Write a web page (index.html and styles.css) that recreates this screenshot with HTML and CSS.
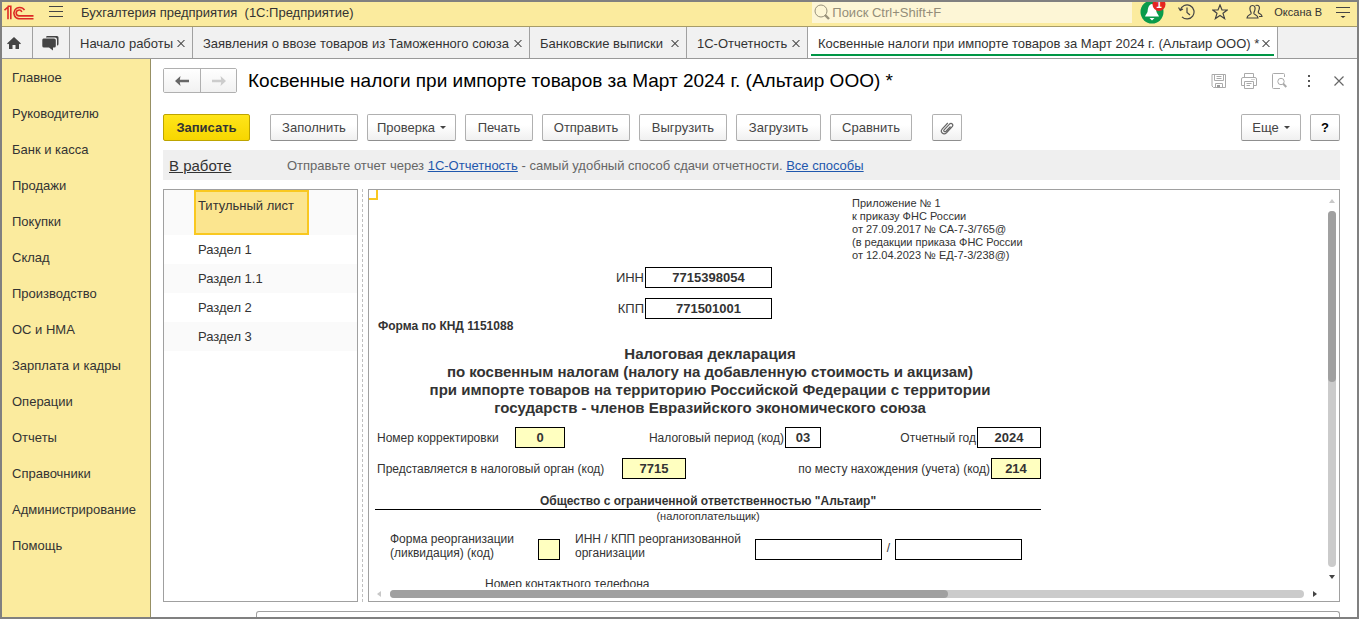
FILE: index.html
```
<!DOCTYPE html>
<html lang="ru">
<head>
<meta charset="utf-8">
<title>Бухгалтерия предприятия</title>
<link rel="stylesheet" href="styles.css">
</head>
<body>
<div class="app">
  <header class="topbar">
    <svg class="logo" width="30" height="15" viewBox="0 0 30 15" fill="none" stroke="#dd2a25" stroke-width="1.6" aria-label="1С">
      <path d="M0.5 5.2 4 2V14.2M3.6 1.3H6.8V14.2"/>
      <path d="M20.5 5.2A5.7 5.7 0 1 0 15 13.8H29.500"/>
      <path d="M17.800 7A2.900 2.900 0 1 0 15.200 10.900H29.500"/>
    </svg>
    <button class="plain menu" aria-label="Меню"><svg width="14" height="14" viewBox="0 0 14 14" stroke="#444" stroke-width="1"><path d="M0 1.500H14M0 6.500H14M0 11.500H14"/></svg></button>
    <div class="app-name">Бухгалтерия предприятия &nbsp;(1С:Предприятие)</div>
    <label class="search">
      <svg width="16" height="16" viewBox="0 0 16 16" fill="none" stroke="#98917a"><circle cx="7" cy="7" r="6"/><path d="M11 11 15 15" stroke-width="2.400"/></svg>
      <input type="search" placeholder="Поиск Ctrl+Shift+F" aria-label="Поиск">
    </label>
    <button class="plain bell" aria-label="Уведомления">
      <svg width="26" height="24" viewBox="0 0 26 24"><circle cx="12" cy="10" r="11.500" fill="#0a9b4b"/><path d="M12 2C8.500 2.500 8 6 7.600 9.500 7.300 11.500 5.500 12.500 5 14.500H19C18.500 12.500 16.700 11.500 16.400 9.500 16 6 15.500 2.500 12 2ZM9.500 16H14.500L12 18.500Z" fill="#fff"/><circle cx="19" cy="2.500" r="6.500" fill="#e52620"/></svg>
      <span class="badge">1</span>
    </button>
    <button class="plain history" aria-label="История"><svg width="17" height="16" viewBox="0 0 17 16" fill="none" stroke="#444" stroke-width="1.200"><path d="M2.300 6A7 7 0 1 1 4 12.800M0.500 3.500 2.300 6.500 5 5M9 3.500V8.500L12 11"/></svg></button>
    <button class="plain star" aria-label="Избранное"><svg width="16" height="16" viewBox="0 0 16 16" fill="none" stroke="#444" stroke-width="1.200"><path d="M8 1 10 6H15.200L11 9.300 12.600 14.600 8 11.400 3.400 14.600 5 9.300 0.800 6H6Z"/></svg></button>
    <button class="plain user" aria-label="Пользователь"><svg width="17" height="16" viewBox="0 0 17 16" fill="none" stroke="#444" stroke-width="1.200"><path d="M6.500 1.500C4 1.500 3.500 4 4.200 6.300 4.800 8.300 5.500 8.500 5 9.800 4.300 11 1 11 1 14H12C12 11 8.700 11 8 9.800 7.500 8.500 8.200 8.300 8.800 6.300 9.500 4 9 1.500 6.500 1.500ZM9.500 1.500C13 .5 14.200 3 13 5.800 12.300 7.300 12 8 12.500 8.800 13.500 10 16 10 16 12.500H13"/></svg></button>
    <span class="user-name">Оксана В</span>
    <button class="plain settings" aria-label="Настройки"><svg width="16" height="14" viewBox="0 0 16 14" stroke="#444" stroke-width="1.200"><path d="M1 2.500H15M1 7.500H15"/><path d="M5.500 11H10.500L8 13Z" fill="#333" stroke="none"/></svg></button>
  </header>

  <nav class="tabs" aria-label="Открытые окна">
    <button class="tab tab-home" aria-label="Начальная страница"><svg width="14" height="12" viewBox="0 0 14 12" fill="#444"><path d="M7 0 14 6.500 13 7.200 12 6.700V12H8.500V8H5.500V12H2V6.700L1 7.200 0 6.500Z"/></svg></button>
    <button class="tab tab-chat" aria-label="Обсуждения"><svg width="17" height="15" viewBox="0 0 17 15" fill="#444"><path d="M5 0H15Q16.500 0 16.500 1.500V8Q16.500 9.500 15 9.500V3.500Q15 1.500 13 1.500H4Q4 0 5 0Z"/><path d="M1.500 2.500H12Q13.800 2.500 13.800 4V10Q13.800 11.500 12.300 11.500H11V14.500L7 11.500H2Q0.300 11.500 0.300 10V4Q0.300 2.500 1.500 2.500Z"/></svg></button>
    <button class="tab tab-start"><span>Начало работы</span><i class="close"></i></button>
    <button class="tab tab-import"><span>Заявления о ввозе товаров из Таможенного союза</span><i class="close"></i></button>
    <button class="tab tab-bank"><span>Банковские выписки</span><i class="close"></i></button>
    <button class="tab tab-report"><span>1С-Отчетность</span><i class="close"></i></button>
    <button class="tab tab-active"><span>Косвенные налоги при импорте товаров за Март 2024 г. (Альтаир ООО) *</span><i class="close"></i></button>
  </nav>

  <div class="body">
    <nav class="sidebar" aria-label="Разделы">
      <a href="#">Главное</a>
      <a href="#">Руководителю</a>
      <a href="#">Банк и касса</a>
      <a href="#">Продажи</a>
      <a href="#">Покупки</a>
      <a href="#">Склад</a>
      <a href="#">Производство</a>
      <a href="#">ОС и НМА</a>
      <a href="#">Зарплата и кадры</a>
      <a href="#">Операции</a>
      <a href="#">Отчеты</a>
      <a href="#">Справочники</a>
      <a href="#">Администрирование</a>
      <a href="#">Помощь</a>
    </nav>

    <main class="main">
      <div class="head">
        <div class="history-nav">
          <button aria-label="Назад"><svg width="14" height="10" viewBox="0 0 14 10" fill="#666"><path d="M0 5 5.500 0 4.800 3.800H14V6.200H4.800L5.500 10Z"/></svg></button>
          <button aria-label="Вперед"><svg width="14" height="10" viewBox="0 0 14 10" fill="#ccc"><path d="M14 5 8.500 0 9.200 3.800H0V6.200H9.200L8.500 10Z"/></svg></button>
        </div>
        <h1>Косвенные налоги при импорте товаров за Март 2024 г. (Альтаир ООО) *</h1>
        <div class="head-tools">
          <button class="plain" aria-label="Сохранить"><svg width="16" height="16" viewBox="0 0 16 16" fill="none" stroke="#aaa"><path d="M1 1.500H14.500V14.500H2.500L1 13ZM3.500 1.500V7.500H12.500V1.500M5.500 3.500H10.500M5.500 5.500H10.500M4.500 14V10.500H11.500V14"/><path d="M6 12H9V14.500H6Z" fill="#999" stroke="none"/></svg></button>
          <button class="plain" aria-label="Печать"><svg width="16" height="16" viewBox="0 0 16 16" fill="none" stroke="#aaa"><path d="M3.500 4.500V.5H12.500V4.500M3.500 12.500H.5V6Q.5 4.500 2 4.500H14Q15.500 4.500 15.500 6V12.500H12.500M3.500 8.500H12.500V15.500H3.500ZM5.500 10.500H10.500M5.500 12.500H9M10.500 6.500H11.500M12.500 6.500H13.500"/></svg></button>
          <button class="plain" aria-label="Просмотр"><svg width="16" height="16" viewBox="0 0 16 16" fill="none" stroke="#aaa"><path d="M13.500 4V1.500Q13.500.5 12.500.5H2.500Q1.500.5 1.500 1.500V14.500Q1.500 15.500 2.500 15.500H9"/><circle cx="10" cy="8.500" r="3.200"/><path d="M12.200 10.800 15.300 14" stroke-width="2"/></svg></button>
          <button class="plain" aria-label="Ещё"><svg width="16" height="16" viewBox="0 0 16 16" fill="#555"><path d="M7 2H9V4H7ZM7 7H9V9H7ZM7 12H9V14H7Z"/></svg></button>
          <button class="plain" aria-label="Закрыть"><svg width="16" height="16" viewBox="0 0 16 16" stroke="#666" stroke-width="1.200"><path d="M3.500 3.500 12.500 12.500M12.500 3.500 3.500 12.500"/></svg></button>
        </div>
      </div>

      <div class="toolbar">
        <button class="btn primary">Записать</button>
        <button class="btn w-m">Заполнить</button>
        <button class="btn w-l">Проверка <i class="caret"></i></button>
        <button class="btn w-xs">Печать</button>
        <button class="btn w-m">Отправить</button>
        <button class="btn w-m">Выгрузить</button>
        <button class="btn w-s">Загрузить</button>
        <button class="btn w-s compare">Сравнить</button>
        <button class="btn icon clip" aria-label="Файлы"><svg width="14" height="14" viewBox="0 0 14 14" fill="none" stroke="#666" stroke-width="1.200"><path d="M10.500 5.500 6 10.200C4.500 11.500 3 10 4.300 8.600L9.300 3.300C11.500 1.200 14 3.700 12 5.900L6.500 11.700C3.500 14.500-.5 11 2.300 7.800L7.800 2"/></svg></button>
        <button class="btn more">Еще <i class="caret"></i></button>
        <button class="btn icon help">?</button>
      </div>

      <div class="info">
        <a class="state" href="#">В работе</a>
        <p>Отправьте отчет через <a href="#">1С-Отчетность</a> - самый удобный способ сдачи отчетности. <a href="#">Все способы</a></p>
      </div>

      <div class="panes">
        <ul class="tree">
          <li class="current"><a href="#">Титульный лист</a></li>
          <li><a href="#">Раздел 1</a></li>
          <li><a href="#">Раздел 1.1</a></li>
          <li><a href="#">Раздел 2</a></li>
          <li><a href="#">Раздел 3</a></li>
        </ul>
        <div class="splitter"></div>
        <section class="sheet">
          <span class="marker"></span>
          <form class="view">
            <p class="appendix">Приложение № 1<br>к приказу ФНС России<br>от 27.09.2017 № СА-7-3/765@<br>(в редакции приказа ФНС России<br>от 12.04.2023 № ЕД-7-3/238@)</p>
            <div class="code"><label for="inn">ИНН</label><input id="inn" value="7715398054"></div>
            <div class="code"><label for="kpp">КПП</label><input id="kpp" value="771501001"></div>
            <p class="knd">Форма по КНД 1151088</p>
            <h2>Налоговая декларация<br>по косвенным налогам (налогу на добавленную стоимость и акцизам)<br>при импорте товаров на территорию Российской Федерации с территории<br>государств - членов Евразийского экономического союза</h2>
            <div class="row period">
              <label for="corr">Номер корректировки</label><input id="corr" class="edit" value="0">
              <label class="end" for="per">Налоговый период (код)</label><input id="per" value="03">
              <label class="end" for="year">Отчетный год</label><input id="year" value="2024">
            </div>
            <div class="row organ">
              <label for="org">Представляется в налоговый орган (код)</label><input id="org" class="edit" value="7715">
              <label class="end" for="place">по месту нахождения (учета) (код)</label><input id="place" class="edit" value="214">
            </div>
            <p class="payer">Общество с ограниченной ответственностью "Альтаир"</p>
            <p class="payer-note">(налогоплательщик)</p>
            <div class="row reorg">
              <label for="form">Форма реорганизации<br>(ликвидация) (код)</label><input id="form" class="edit">
              <label class="second" for="rinn">ИНН / КПП реорганизованной<br>организации</label><input id="rinn">
              <span class="slash">/</span><input aria-label="КПП реорганизованной организации">
            </div>
            <p class="phone">Номер контактного телефона</p>
          </form>
          <div class="vscroll"><i class="arrow up"></i><div class="track"><div class="thumb"></div></div><i class="arrow down"></i></div>
          <div class="hscroll"><i class="arrow left"></i><div class="track"><div class="thumb"></div></div><i class="arrow right"></i></div>
        </section>
      </div>
      <div class="next-panel"></div>
    </main>
  </div>
</div>
</body>
</html>
```
FILE: styles.css
```
* { box-sizing: border-box; }

body, h1, h2, p, ul { margin: 0; padding: 0; }

body {
  font-family: "Liberation Sans", Arial, sans-serif;
  font-size: 13px;
  color: #333;
}

button, input { font: inherit; color: inherit; margin: 0; border-radius: 0; }
svg { display: block; flex: none; }

.app {
  display: flex;
  flex-direction: column;
  height: 100vh;
  border: 2px solid #808080;
  background: #fff;
  overflow: hidden;
}

.plain { display: flex; padding: 0; border: 0; background: none; }

/* Top bar */
.topbar {
  display: flex;
  align-items: center;
  flex: none;
  height: 25px;
  padding: 0 6px 4px 2px;
  background: #fbeb9e;
  border-bottom: 1px solid #a79c68;
  overflow: hidden;
}
.menu { margin-left: 15px; }
.app-name { margin-left: 18px; white-space: nowrap; }
.search {
  display: flex;
  align-items: center;
  width: 320px;
  height: 21px;
  margin-left: auto;
  padding-left: 2px;
  background: #fdf6d6;
}
.search input { width: 100%; padding: 0 2px; border: 0; background: none; outline: 0; }
.search input::placeholder { color: #938d79; opacity: 1; }
.bell { position: relative; align-self: flex-start; margin-left: 8px; }
.badge { position: absolute; top: -2px; left: 16px; font-size: 10px; line-height: 10px; font-weight: bold; color: #fff; }
.history { margin-left: 12px; }
.star { margin-left: 17px; }
.user { margin-left: 18px; }
.user-name { margin-left: 11px; font-size: 11px; white-space: nowrap; }
.settings { margin-left: 13px; }

/* Window tabs */
.tabs {
  display: flex;
  flex: none;
  height: 32px;
  background: #f1f1f1;
  border-bottom: 1px solid #999;
}
.tab {
  display: flex;
  align-items: center;
  justify-content: space-between;
  padding: 2px 7px 0 10px;
  border: 0;
  border-right: 1px solid #a0a0a0;
  background: none;
  white-space: nowrap;
}
.tab-home { width: 31px; padding: 0 0 0 5px; }
.tab-chat { width: 37px; padding: 2px 0 0 9px; }
.tab-start { width: 123px; }
.tab-import { width: 337px; }
.tab-bank { width: 157px; }
.tab-report { width: 121px; }
.tab-active { position: relative; width: 470px; background: #fff; }
.tab-active::after {
  content: "";
  position: absolute;
  left: 3px;
  right: 3px;
  bottom: 2px;
  height: 2px;
  background: #009646;
}
.close { position: relative; width: 8px; height: 7px; overflow: hidden; }
.close::before, .close::after {
  content: "";
  position: absolute;
  left: -1px;
  top: 3px;
  width: 10px;
  height: 1px;
  background: #444;
  transform: rotate(45deg);
}
.close::after { transform: rotate(-45deg); }

/* Sidebar */
.body { display: flex; flex: 1; min-height: 0; }
.sidebar {
  flex: none;
  width: 149px;
  padding-top: 1px;
  background: #fbeb9e;
  border-right: 1px solid #979064;
}
.sidebar a {
  display: block;
  padding-left: 10px;
  line-height: 36px;
  color: #333;
  text-decoration: none;
}

/* Page head */
.main {
  display: flex;
  flex-direction: column;
  flex: 1;
  min-width: 0;
  padding: 9px 17px 0 12px;
}
.head { display: flex; align-items: center; flex: none; height: 25px; }
.history-nav { display: flex; height: 25px; border: 1px solid #b0b0b0; border-radius: 2px; }
.history-nav button {
  display: flex;
  align-items: center;
  justify-content: center;
  width: 36px;
  padding: 0;
  border: 0;
  background: linear-gradient(#fff, #f1f1f1);
}
.history-nav button + button { border-left: 1px solid #b0b0b0; }
h1 { margin-left: 11px; font-size: 19px; line-height: 25px; font-weight: normal; color: #000; white-space: nowrap; }
.head-tools { display: flex; gap: 14px; margin-left: auto; margin-right: -7px; }

/* Command bar */
.toolbar { display: flex; flex: none; gap: 9px; margin-top: 21px; }
.btn {
  display: flex;
  align-items: center;
  justify-content: center;
  height: 27px;
  padding: 0;
  border: 1px solid #b0b0b0;
  border-bottom-color: #8f8f8f;
  border-radius: 2px;
  background: linear-gradient(#fff 40%, #f0f0f0);
  color: #444;
}
.primary {
  width: 87px;
  margin-right: 11px;
  border-color: #bda400;
  background: linear-gradient(#ffe51a, #f7d600);
  font-weight: bold;
  color: #333;
}
.w-l { width: 89px; }
.w-m { width: 88px; }
.w-s { width: 85px; }
.compare { width: 82px; }
.w-xs { width: 68px; }
.icon { width: 30px; }
.clip { margin-left: 11px; }
.more { width: 60px; margin-left: auto; }
.help { font-weight: bold; color: #000; }
.caret {
  margin-left: 5px;
  border: 3px solid transparent;
  border-top-color: #444;
  border-bottom: 0;
}

.info {
  display: flex;
  align-items: center;
  flex: none;
  height: 30px;
  margin-top: 9px;
  padding-left: 6px;
  background: #efefef;
  color: #666;
  white-space: nowrap;
}
.info a { color: #1f57ad; }
.info .state { width: 118px; font-size: 15px; color: #333; }

/* Panes */
.panes { display: flex; flex: 1; min-height: 0; margin-top: 9px; }
.tree { flex: none; width: 195px; border: 1px solid #a0a0a0; list-style: none; }
.tree li { height: 29px; padding-left: 34px; line-height: 29px; }
.tree li:nth-child(odd) { background: #fafafa; }
.tree .current { height: 45px; padding-left: 30px; }
.tree a { color: #333; text-decoration: none; }
.tree .current a {
  display: block;
  width: 115px;
  height: 45px;
  padding-left: 2px;
  border: 2px solid #f9c820;
  background: #fbe58f;
  line-height: 28px;
}
.splitter { flex: none; width: 5px; margin-right: 5px; border-right: 1px dashed #c0c0c0; }
.sheet {
  position: relative;
  display: grid;
  grid-template-columns: minmax(0, 1fr) 11px;
  grid-template-rows: minmax(0, 1fr) 14px;
  flex: 1;
  min-width: 0;
  border: 1px solid #a0a0a0;
}
.marker {
  position: absolute;
  left: 0;
  top: 0;
  width: 9px;
  height: 10px;
  border-right: 2px solid #f9c820;
  border-bottom: 2px solid #f9c820;
}

/* Declaration form */
.view { overflow: hidden; padding: 7px 0 0 6px; }
.view > * { width: 666px; }
.view input {
  width: 100%;
  height: 21px;
  padding: 0;
  border: 1px solid #000;
  background: #fff;
  text-align: center;
  font-weight: bold;
}
.view .edit { background: #ffffc0; }
.appendix { padding-left: 477px; font-size: 11px; line-height: 13px; white-space: nowrap; }
.code {
  display: grid;
  grid-template-columns: 270px 127px;
  align-items: center;
  margin-top: 10px;
}
.appendix + .code { margin-top: 5px; }
.code label, .end { text-align: right; padding-right: 1px; }
.knd { padding-left: 3px; font-size: 12px; line-height: 14px; font-weight: bold; }
h2 { margin-top: 12px; padding-left: 4px; font-size: 15px; line-height: 18px; text-align: center; white-space: nowrap; }
.row { display: grid; align-items: center; padding-left: 2px; white-space: nowrap; font-size: 12px; line-height: 14px; }
.row input { font-size: 13px; }
.period { grid-template-columns: 138px 50px 220px 36px 156px 64px; margin-top: 10px; }
.organ { grid-template-columns: 245px 64px 305px 50px; margin-top: 10px; }
.payer { margin-top: 15px; border-bottom: 1px solid #000; font-size: 12px; line-height: 15px; font-weight: bold; text-align: center; }
.payer-note { font-size: 11px; line-height: 12px; text-align: center; }
.reorg { grid-template-columns: 148px 22px 195px 127px 13px 127px; margin-top: 10px; padding-left: 15px; }
.reorg input { align-self: end; }
.second { padding-left: 15px; }
.slash { padding-top: 4px; text-align: center; }
.phone { margin-top: 17px; padding-left: 110px; font-size: 12px; line-height: 14px; }

/* Scroll bars */
.vscroll, .hscroll { display: flex; align-items: center; }
.vscroll { flex-direction: column; width: 8px; padding-top: 9px; }
.hscroll { height: 8px; margin-top: 3px; padding-left: 8px; }
.track { flex: 1; border-radius: 4px; background: #cbcbcb; }
.thumb { border-radius: 4px; background: #a0a0a0; }
.vscroll .track { width: 8px; margin: 8px 0; }
.vscroll .thumb { height: 48%; }
.hscroll .track { height: 8px; margin: 0 9px; }
.hscroll .thumb { width: 61%; height: 8px; }
.arrow { border: 3px solid transparent; }
.up { border-top: 0; border-bottom: 4px solid #c8c8c8; }
.down { border-bottom: 0; border-top: 4px solid #444; margin-bottom: 8px; }
.left { border-left: 0; border-right: 4px solid #c8c8c8; }
.right { border-right: 0; border-left: 4px solid #444; margin-right: 11px; }

.next-panel {
  flex: none;
  height: 6px;
  margin: 9px 0 0 93px;
  border: 1px solid #a0a0a0;
  border-bottom: 0;
  border-radius: 3px 3px 0 0;
}
```
